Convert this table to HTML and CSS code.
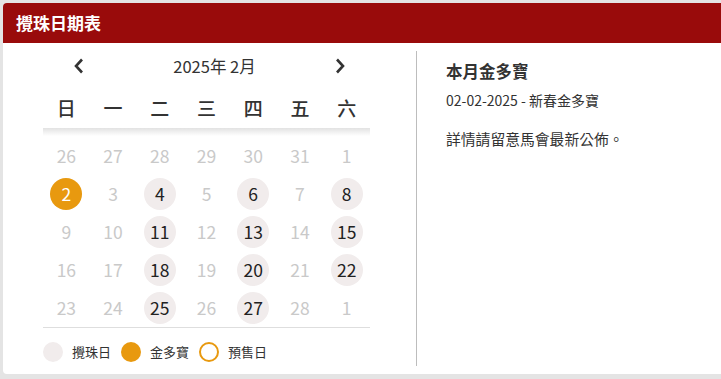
FILE: index.html
```html
<!DOCTYPE html>
<html lang="zh-Hant">
<head>
<meta charset="utf-8">
<link rel="stylesheet" href="styles.css">
</head>
<body>
<div class="card">
  <div class="card-header">攪珠日期表</div>
  <div class="card-body">
    <div class="cal-col">
      <div class="month-nav">
        <span class="arrow"><svg width="10" height="16" viewBox="0 0 10 16"><path d="M8 1.5 L2 8 L8 14.5" fill="none" stroke="#333" stroke-width="2.6" stroke-linecap="butt" stroke-linejoin="miter"/></svg></span>
        <span class="month-title">2025年 2月</span>
        <span class="arrow"><svg width="10" height="16" viewBox="0 0 10 16"><path d="M2 1.5 L8 8 L2 14.5" fill="none" stroke="#333" stroke-width="2.6" stroke-linecap="butt" stroke-linejoin="miter"/></svg></span>
      </div>
      <div class="weekdays">
        <span>日</span><span>一</span><span>二</span><span>三</span><span>四</span><span>五</span><span>六</span>
      </div>
      <div class="band"></div>
      <div class="days">
        <span class="d out">26</span><span class="d out">27</span><span class="d out">28</span><span class="d out">29</span><span class="d out">30</span><span class="d out">31</span><span class="d out">1</span>
        <span class="d jackpot">2</span><span class="d off">3</span><span class="d draw">4</span><span class="d off">5</span><span class="d draw">6</span><span class="d off">7</span><span class="d draw">8</span>
        <span class="d off">9</span><span class="d off">10</span><span class="d draw">11</span><span class="d off">12</span><span class="d draw">13</span><span class="d off">14</span><span class="d draw">15</span>
        <span class="d off">16</span><span class="d off">17</span><span class="d draw">18</span><span class="d off">19</span><span class="d draw">20</span><span class="d off">21</span><span class="d draw">22</span>
        <span class="d off">23</span><span class="d off">24</span><span class="d draw">25</span><span class="d off">26</span><span class="d draw">27</span><span class="d out">28</span><span class="d out">1</span>
      </div>
      <div class="legend">
        <span class="dot dot-draw"></span><span class="legend-label">攪珠日</span>
        <span class="dot dot-jackpot"></span><span class="legend-label">金多寶</span>
        <span class="dot dot-presale"></span><span class="legend-label">預售日</span>
      </div>
    </div>
    <div class="divider"></div>
    <div class="info-col">
      <h2 class="info-title">本月金多寶</h2>
      <p class="info-line">02-02-2025 - 新春金多寶</p>
      <p class="info-note">詳情請留意馬會最新公佈。</p>
    </div>
  </div>
</div>
</body>
</html>
```
FILE: styles.css
```css
html, body {
  margin: 0;
  padding: 0;
}
body {
  background: #e4e4e4;
  padding: 3px 0 0 3px;
  font-family: "Noto Sans CJK TC", "Noto Sans", sans-serif;
  color: #333;
  overflow: hidden;
}
.card {
  background: #fff;
  width: 740px;
  border-radius: 4px;
  overflow: hidden;
}
.card-header {
  background: #990b0b;
  color: #fff;
  font-weight: 700;
  font-size: 17px;
  height: 40px;
  line-height: 40px;
  padding-left: 13px;
}
.card-body {
  display: flex;
  padding: 8px 0;
}
.cal-col {
  width: 327px;
  padding-left: 40px;
  padding-right: 46px;
}
.month-nav {
  display: grid;
  grid-template-columns: 32px 1fr 32px;
  align-items: center;
  height: 30px;
  margin-left: 20px;
  margin-right: 14px;
}
.arrow {
  display: flex;
  justify-content: center;
  align-items: center;
}
.month-title {
  text-align: center;
  font-size: 16.5px;
  line-height: 28px;
  padding-left: 10px;
}
.weekdays {
  display: grid;
  grid-template-columns: repeat(7, 1fr);
  height: 40px;
  margin-top: 7px;
  align-items: center;
  text-align: center;
  font-size: 19px;
  line-height: 38px;
  font-weight: 500;
  color: #333;
}
.band {
  height: 8px;
  background: linear-gradient(#e2e2e2, #ffffff);
}
.days {
  display: grid;
  grid-template-columns: repeat(7, 1fr);
  grid-auto-rows: 38px;
  justify-items: center;
  align-items: center;
  padding-top: 1px;
  border-bottom: 1px solid #dedede;
}
.d {
  width: 32px;
  height: 32px;
  border-radius: 50%;
  display: flex;
  justify-content: center;
  align-items: center;
  font-size: 17.5px;
  line-height: 30px;
}
.out, .off {
  color: #c9c9c9;
}
.draw {
  background: #f1ecec;
  color: #222;
}
.jackpot {
  background: #e8990f;
  color: #fff;
}
.legend {
  display: flex;
  align-items: center;
  height: 28px;
  padding-top: 10px;
  font-size: 13px;
  color: #333;
}
.dot {
  width: 20px;
  height: 20px;
  border-radius: 50%;
  box-sizing: border-box;
  flex: none;
}
.dot-draw { background: #f1ecec; }
.dot-jackpot { background: #e8990f; }
.dot-presale { border: 2px solid #e8990f; }
.legend-label {
  margin-left: 9px;
  margin-right: 10px;
  line-height: 20px;
}
.divider {
  width: 1px;
  background: #bdbdbd;
}
.info-col {
  padding-left: 29px;
  padding-top: 8px;
}
.info-title {
  margin: 0;
  font-size: 16.5px;
  font-weight: 700;
  line-height: 24px;
}
.info-line {
  margin: 7px 0 0;
  font-size: 14px;
  line-height: 20px;
}
.info-note {
  margin: 19px 0 0;
  font-size: 14.8px;
  line-height: 20px;
}
```
